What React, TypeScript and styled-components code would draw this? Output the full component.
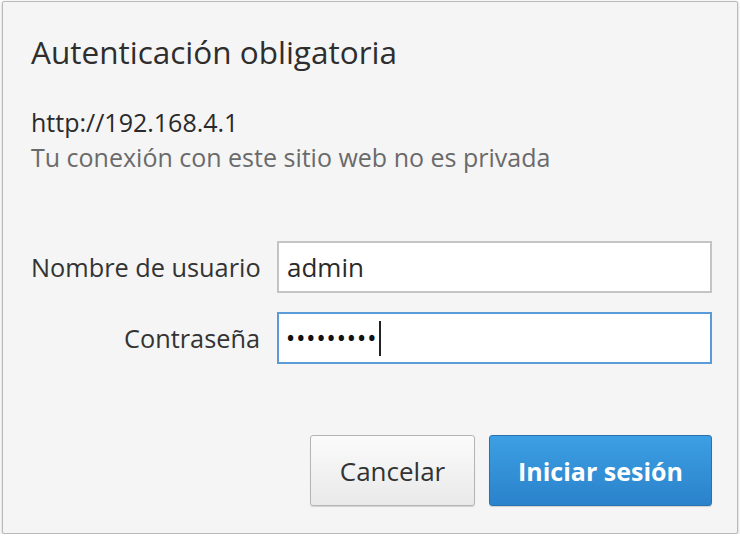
import React from "react";
import styled, { createGlobalStyle } from "styled-components";

const GlobalStyle = createGlobalStyle`
  html, body {
    margin: 0;
    padding: 0;
    background: #ffffff;
  }
  body {
    font-family: "Open Sans", "Noto Sans", "DejaVu Sans", sans-serif;
  }
`;

export default function App() {
  return (
    <>
      <GlobalStyle />
      <Dialog>
        <Title>Autenticación obligatoria</Title>
        <Origin>
          <Url>http://192.168.4.1</Url>
          <Warning>Tu conexión con este sitio web no es privada</Warning>
        </Origin>
        <Form>
          <Label>Nombre de usuario</Label>
          <Field>admin</Field>
          <Label>Contraseña</Label>
          <Field $focused>
            <Dots>•••••••••</Dots>
            <Caret />
          </Field>
        </Form>
        <Footer>
          <Button>Cancelar</Button>
          <Button $primary>Iniciar sesión</Button>
        </Footer>
      </Dialog>
    </>
  );
}

const Dialog = styled.div`
  box-sizing: border-box;
  margin: 1px 0 0 2px;
  width: 736px;
  height: 533px;
  background: #f5f5f5;
  border: 1px solid #b9b9b9;
  border-radius: 2px;
  box-shadow: 0 1px 3px rgba(0, 0, 0, 0.25);
  padding: 30px 25px 0 28px;
  display: flex;
  flex-direction: column;
`;

const Title = styled.h1`
  margin: 0;
  font-size: 31.5px;
  font-weight: 400;
  line-height: 40px;
  color: #2e2e2e;
`;

const Origin = styled.div`
  margin-top: 33px;
  font-size: 25px;
  line-height: 35px;
`;

const Url = styled.div`
  color: #2a2a2a;
`;

const Warning = styled.div`
  color: #6a6a6a;
`;

const Form = styled.div`
  margin-top: 66px;
  display: grid;
  grid-template-columns: 229px 1fr;
  column-gap: 17px;
  row-gap: 19px;
  align-items: center;
`;

const Label = styled.div`
  text-align: right;
  font-size: 25.3px;
  color: #333333;
  white-space: nowrap;
`;

const Field = styled.div<{ $focused?: boolean }>`
  box-sizing: border-box;
  height: 52px;
  display: flex;
  align-items: center;
  padding: 0 8px;
  background: #ffffff;
  border: ${(p) => (p.$focused ? "2px solid #5b9bd8" : "2px solid #c4c4c4")};
  font-size: 26px;
  color: #2a2a2a;
`;

const Dots = styled.span`
  font-size: 19px;
  letter-spacing: 3px;
  color: #111111;
  font-weight: 700;
`;

const Caret = styled.span`
  display: inline-block;
  width: 2px;
  height: 35px;
  margin-left: 1px;
  background: #222222;
`;

const Footer = styled.div`
  margin-top: auto;
  margin-bottom: 27px;
  display: flex;
  justify-content: flex-end;
  gap: 14px;
`;

const Button = styled.button<{ $primary?: boolean }>`
  box-sizing: border-box;
  height: 71px;
  padding: 0 20px;
  min-width: ${(p) => (p.$primary ? "223px" : "165px")};
  border-radius: 3px;
  font-family: inherit;
  font-size: ${(p) => (p.$primary ? "25px" : "26px")};
  font-weight: ${(p) => (p.$primary ? 700 : 400)};
  color: ${(p) => (p.$primary ? "#ffffff" : "#333333")};
  background: ${(p) =>
    p.$primary
      ? "linear-gradient(#3d9fe3, #2a82cb)"
      : "linear-gradient(#fbfbfb, #e9e9e9)"};
  border: 1px solid ${(p) => (p.$primary ? "#2a72ad" : "#b5b5b5")};
  box-shadow: 0 1px 1px rgba(0, 0, 0, 0.15);
`;
